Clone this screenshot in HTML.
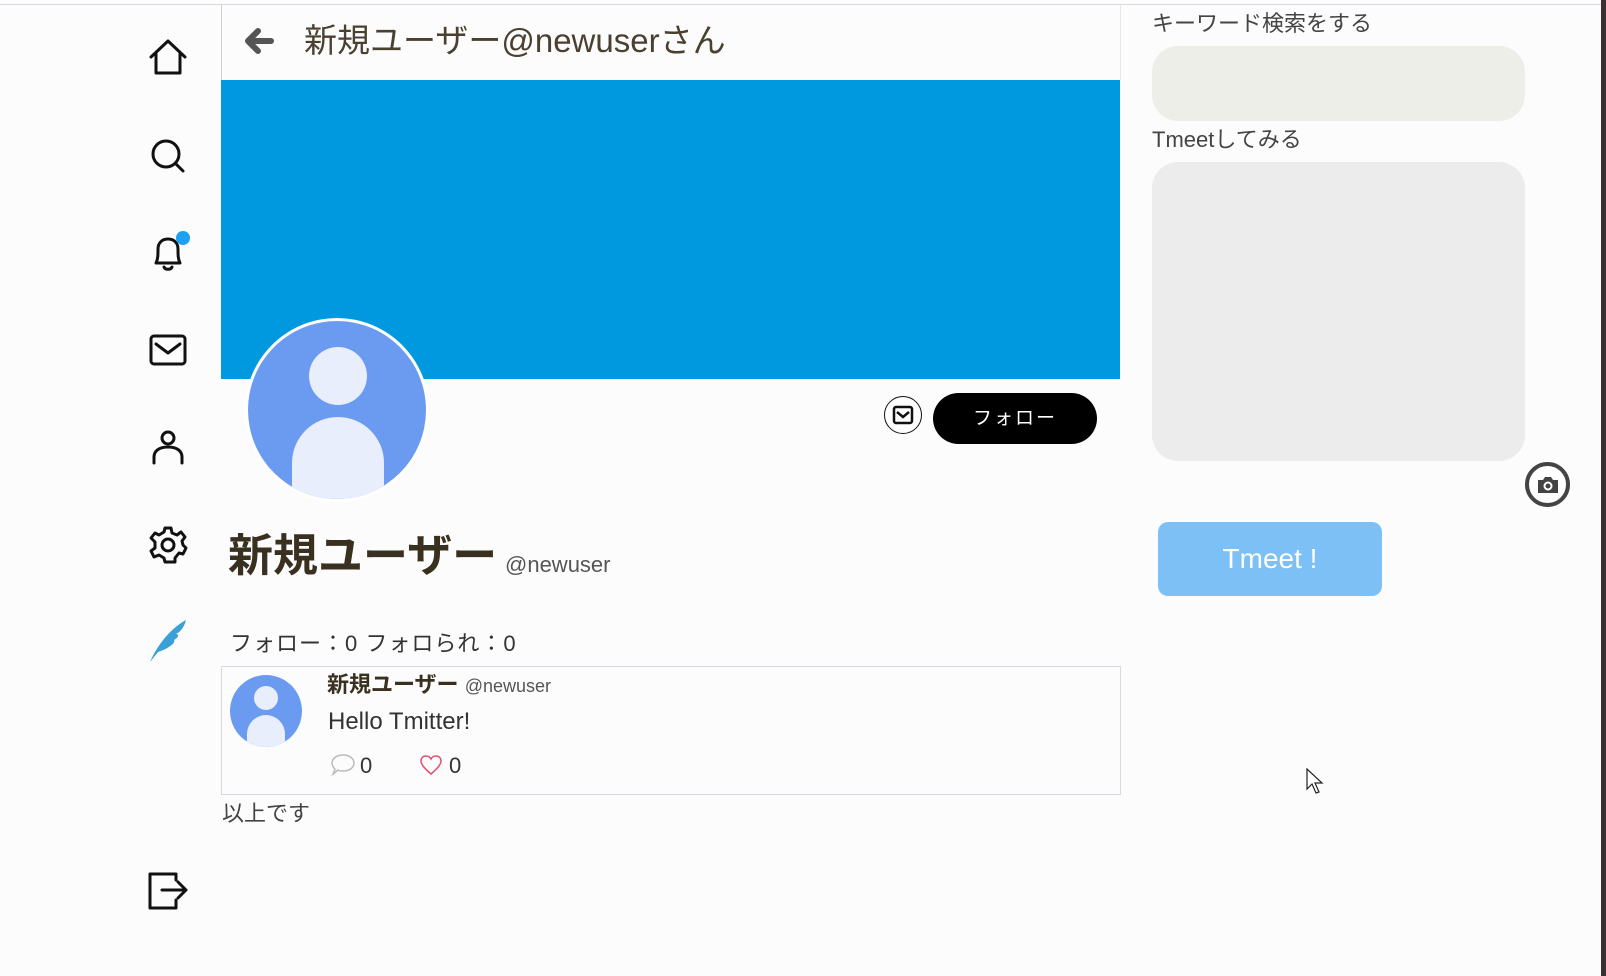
<!DOCTYPE html>
<html><head><meta charset="utf-8"><style>
*{margin:0;padding:0;box-sizing:border-box}
body{width:1606px;height:976px;background:#fcfcfd;position:relative;overflow:hidden;font-family:"Liberation Sans","Noto Sans CJK JP",sans-serif;color:#333}
.a{position:absolute}
.ic{position:absolute;left:146px;width:44px;height:44px}
.ic svg{width:44px;height:44px;fill:none;stroke:#111;stroke-width:3;stroke-linecap:round;stroke-linejoin:round}
</style></head><body>
<div class="a" style="left:0;top:4px;width:1606px;height:1px;background:#d8d8e0"></div>
<div class="a" style="left:221px;top:5px;width:1px;height:75px;background:#d0d0d0"></div>
<div class="a" style="left:1120px;top:5px;width:1px;height:75px;background:#e8e8e8"></div>
<div class="a" style="left:1601px;top:0;width:5px;height:976px;background:#3a3030"></div>

<div class="ic" style="top:35px"><svg viewBox="0 0 44 44"><path d="M5 22 L22 6 L39 22 M10 18 V38 H34 V18"/></svg></div>
<div class="ic" style="top:134px"><svg viewBox="0 0 44 44"><circle cx="20" cy="20" r="13"/><path d="M30 30 L37 37"/></svg></div>
<div class="ic" style="top:231px"><svg viewBox="0 0 44 44"><path d="M10 32 C12 28 12 24 12 18 C12 12 16 8 22 8 C28 8 32 12 32 18 C32 24 32 28 34 32 Z M18 36 C19 39 25 39 26 36"/></svg><div class="a" style="left:30px;top:0;width:14px;height:14px;border-radius:50%;background:#1da1f2"></div></div>
<div class="ic" style="top:328px"><svg viewBox="0 0 44 44"><rect x="5" y="8" width="34" height="28" rx="3"/><path d="M10 16 L22 25 L34 16"/></svg></div>
<div class="ic" style="top:425px"><svg viewBox="0 0 44 44"><circle cx="22" cy="13" r="6"/><path d="M8 38 V32 C8 26 13 22 22 22 C31 22 36 26 36 32 V38"/></svg></div>
<div class="ic" style="top:523px"><svg viewBox="0 0 44 44"><path d="M19 5 H25 L26 10 L31 12 L35 9 L39 14 L36 18 L37 22 L40 25 L37 31 L33 30 L29 35 L29 39 H19 L18 35 L13 32 L8 34 L5 28 L9 25 V19 L5 15 L9 10 L13 12 L18 9 Z"/><circle cx="22" cy="22" r="6"/></svg></div>
<div class="ic" style="top:618px"><svg viewBox="0 0 44 44"><path d="M4 44 C10 30 22 12 40 2 C38 10 34 14 30 16 C34 16 32 20 28 22 C30 24 24 30 12 34 Z" fill="#3aa0d8" stroke="none"/></svg></div>
<div class="ic" style="top:868px"><svg viewBox="0 0 44 44"><path d="M30 12 V6 H4 V40 H30 V32 M16 22 H40 M32 14 L40 22 L32 30"/></svg></div>

<svg class="a" style="left:243px;top:26px" width="32" height="30" viewBox="0 0 32 30"><path d="M28 15 H6 M15 5 L5 15 L15 25" stroke="#555" stroke-width="6" fill="none" stroke-linecap="round" stroke-linejoin="round"/></svg>
<div class="a" style="left:304px;top:20px;font-size:33px;color:#4a4030;line-height:42px">新規ユーザー@newuserさん</div>

<div class="a" style="left:221px;top:80px;width:899px;height:299px;background:#0099e0"></div>
<div class="a" style="left:245px;top:318px;width:184px;height:184px;border-radius:50%;background:#fff;"></div>
<div class="a" style="left:248px;top:321px;width:178px;height:178px;border-radius:50%;background:#6b9bf0;overflow:hidden">
 <div class="a" style="left:61px;top:26px;width:58px;height:58px;border-radius:50%;background:#e8eefc"></div>
 <div class="a" style="left:44px;top:96px;width:92px;height:110px;border-radius:46px 46px 0 0;background:#e8eefc"></div>
</div>

<div class="a" style="left:884px;top:396px;width:38px;height:38px;border-radius:50%;border:1.5px solid #111;background:#fff"><svg class="a" style="left:7px;top:7px" width="22" height="22" viewBox="0 0 22 22"><rect x="2" y="3" width="18" height="16" rx="2" fill="none" stroke="#111" stroke-width="2.5"/><path d="M5 8 L11 13 L17 8" fill="none" stroke="#111" stroke-width="2.5"/></svg></div>
<div class="a" style="left:933px;top:393px;width:164px;height:51px;border-radius:26px;background:#000;color:#fff;font-size:19px;text-align:center;line-height:51px;letter-spacing:2px">フォロー</div>

<div class="a" style="left:228px;top:528px;font-size:45px;font-weight:bold;color:#3a3020;line-height:56px">新規ユーザー</div>
<div class="a" style="left:505px;top:551px;font-size:22px;color:#555;line-height:28px">@newuser</div>
<div class="a" style="left:230px;top:630px;font-size:22px;color:#333;line-height:28px;letter-spacing:1px">フォロー：0 フォロられ：0</div>

<div class="a" style="left:221px;top:666px;width:900px;height:129px;border:1px solid #d8d8e0"></div>
<div class="a" style="left:230px;top:675px;width:72px;height:72px;border-radius:50%;background:#6b9bf0;overflow:hidden">
 <div class="a" style="left:24px;top:11px;width:24px;height:24px;border-radius:50%;background:#e8eefc"></div>
 <div class="a" style="left:17px;top:40px;width:38px;height:50px;border-radius:19px 19px 0 0;background:#e8eefc"></div>
</div>
<div class="a" style="left:327px;top:671px;font-size:22px;font-weight:bold;color:#3a3020;line-height:28px">新規ユーザー <span style="font-size:18px;font-weight:normal;color:#555">@newuser</span></div>
<div class="a" style="left:328px;top:707px;font-size:24px;color:#333;line-height:30px">Hello Tmitter!</div>
<svg class="a" style="left:330px;top:753px" width="26" height="24" viewBox="0 0 26 24"><path d="M13 2 C20 2 24 6 24 10 C24 14 20 18 13 18 C11 18 9 18 8 17 L3 21 L5 16 C3 14 2 12 2 10 C2 6 6 2 13 2 Z" fill="none" stroke="#bbb" stroke-width="1.5"/></svg>
<div class="a" style="left:360px;top:752px;font-size:22px;line-height:28px">0</div>
<svg class="a" style="left:419px;top:754px" width="24" height="22" viewBox="0 0 24 22"><path d="M12 20 C4 13 2 10 2 7 C2 4 4 2 7 2 C9 2 11 3 12 5 C13 3 15 2 17 2 C20 2 22 4 22 7 C22 10 20 13 12 20 Z" fill="none" stroke="#e05070" stroke-width="1.5"/></svg>
<div class="a" style="left:449px;top:752px;font-size:22px;line-height:28px">0</div>
<div class="a" style="left:222px;top:800px;font-size:22px;color:#444;line-height:28px">以上です</div>

<div class="a" style="left:1152px;top:10px;font-size:22px;color:#444;line-height:28px">キーワード検索をする</div>
<div class="a" style="left:1152px;top:46px;width:373px;height:75px;border-radius:26px;background:#eeeee8"></div>
<div class="a" style="left:1152px;top:126px;font-size:22px;color:#444;line-height:28px">Tmeetしてみる</div>
<div class="a" style="left:1152px;top:162px;width:373px;height:299px;border-radius:26px;background:#ececec"></div>
<div class="a" style="left:1525px;top:462px;width:45px;height:45px;border-radius:50%;border:4px solid #444;background:#fff"><svg class="a" style="left:7px;top:8px" width="24" height="22" viewBox="0 0 24 22"><path d="M2 6 H7 L9 3 H15 L17 6 H22 V19 H2 Z" fill="#444"/><circle cx="12" cy="12" r="4.5" fill="#fff"/><circle cx="12" cy="12" r="2.5" fill="#444"/></svg></div>
<div class="a" style="left:1158px;top:522px;width:224px;height:74px;border-radius:10px;background:#7cc0f5;color:#fff;font-size:28px;text-align:center;line-height:74px">Tmeet !</div>
<svg class="a" style="left:1306px;top:768px" width="20" height="28" viewBox="0 0 20 28"><path d="M1 1 V21 L6 16 L10 25 L13 24 L9 15 L16 15 Z" fill="#fff" stroke="#222" stroke-width="1.2"/></svg>
</body></html>
